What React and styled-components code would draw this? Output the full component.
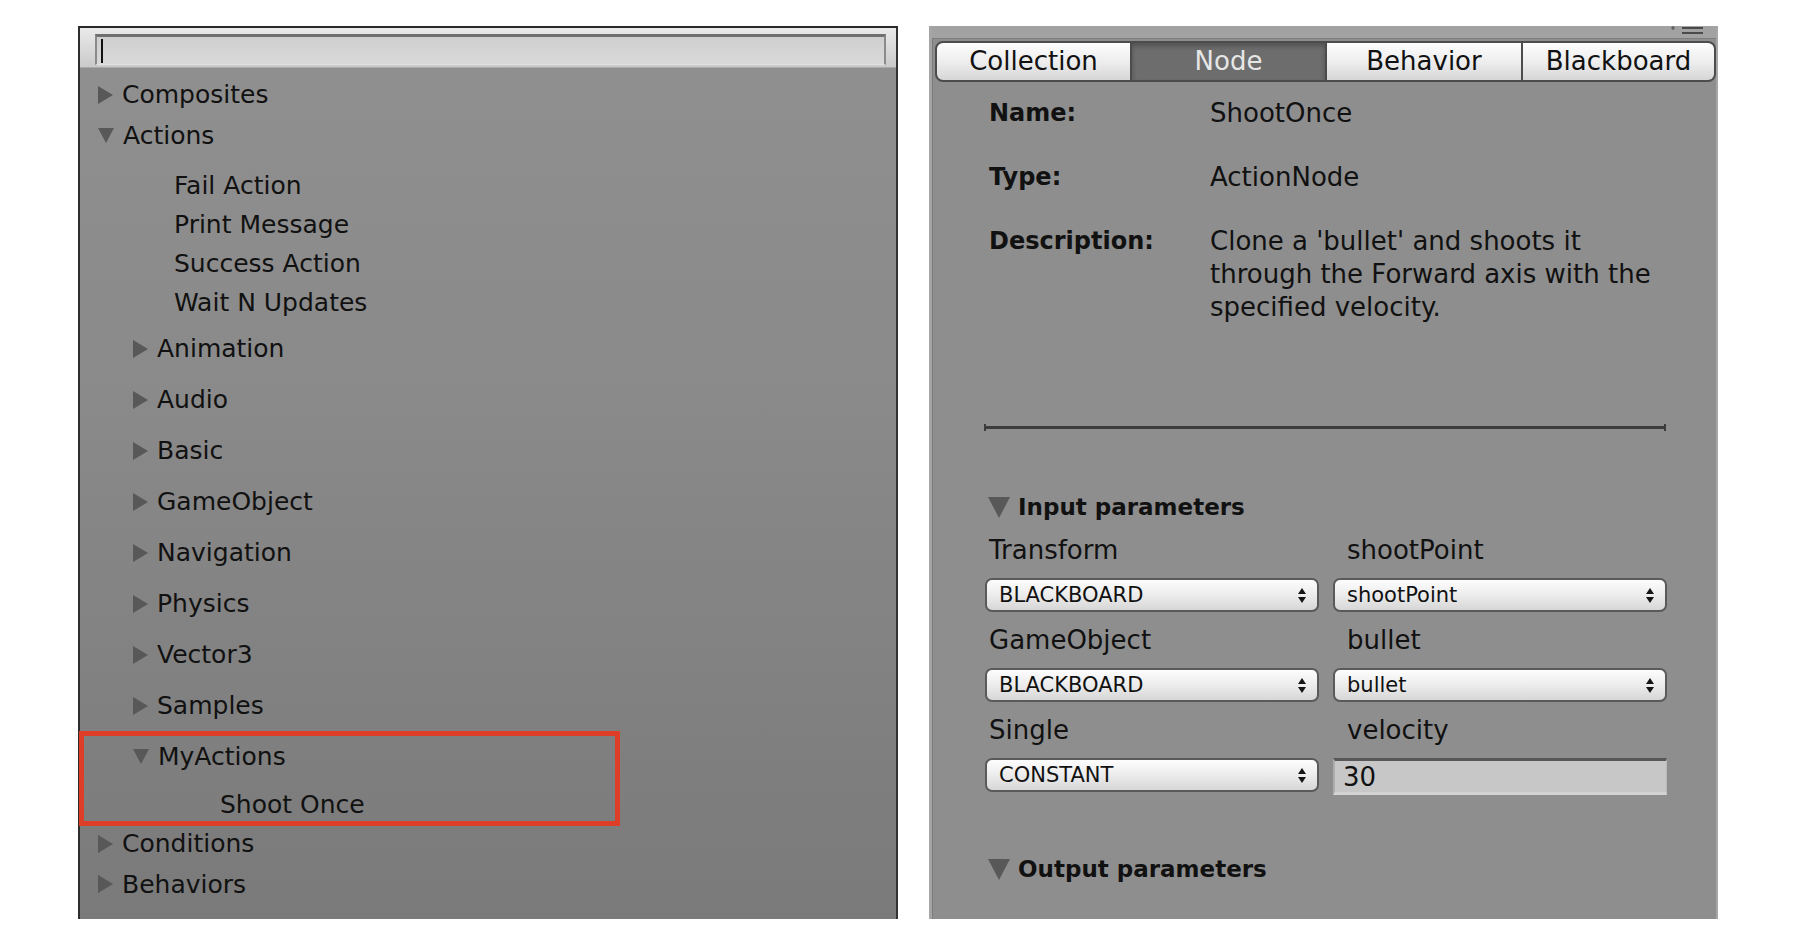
import styled, { createGlobalStyle } from "styled-components";

const GlobalStyle = createGlobalStyle`
  body {
    margin: 0;
    background: #ffffff;
    font-family: "DejaVu Sans", "Liberation Sans", sans-serif;
  }
`;

const Page = styled.div`
  display: flex;
  align-items: flex-start;
  gap: 31px;
  padding: 26px 0 0 78px;
`;

/* ---------- left: node tree ---------- */

const TreePanel = styled.section`
  box-sizing: border-box;
  width: 820px;
  height: 893px;
  display: flex;
  flex-direction: column;
  border-top: 2px solid #2a2a2a;
  border-left: 2px solid #2e2e2e;
  border-right: 2px solid #333;
  background: linear-gradient(#909090 0%, #8a8a8a 40%, #7a7a7a 100%);
`;

const SearchBar = styled.div`
  display: flex;
  height: 40px;
  box-sizing: border-box;
  padding: 6px 10px 2px 15px;
  background: linear-gradient(#eaeaea, #cacaca);
  border-bottom: 1px solid #a9a9a9;
`;

const SearchField = styled.div`
  flex: 1;
  display: flex;
  align-items: center;
  box-sizing: border-box;
  border-top: 3px solid #707070;
  border-left: 2px solid #8a8a8a;
  border-right: 2px solid #8a8a8a;
  border-bottom: 1px solid #e2e2e2;
  background: linear-gradient(#cfcfcf, #d9d9d9);

  &::before {
    content: "";
    width: 2px;
    height: 24px;
    margin-left: 4px;
    background: #111;
  }
`;

const Tree = styled.div`
  padding-top: 6px;
`;

const Row = styled.div`
  display: flex;
  align-items: center;
  gap: 9px;
  height: ${({ $h }) => $h}px;
  padding-left: ${({ $indent }) => $indent}px;
  font-size: 25px;
  color: #111;
  white-space: nowrap;
`;

const Arrow = styled.span`
  display: inline-block;
  width: 0;
  height: 0;
  ${({ $open, $size = 8 }) =>
    $open
      ? `border-left: ${$size}px solid transparent;
         border-right: ${$size}px solid transparent;
         border-top: ${$size * 2 - 1}px solid #585858;`
      : `border-top: ${$size + 1}px solid transparent;
         border-bottom: ${$size + 1}px solid transparent;
         border-left: ${$size * 2 - 1}px solid #585858;`}
`;

const Highlight = styled.div`
  width: 541px;
  margin-left: -1px;
  box-shadow: inset 0 0 0 5px #de3d27;
`;

const Spacer = styled.div`
  height: ${({ $h }) => $h}px;
`;

const leaves = ["Fail Action", "Print Message", "Success Action", "Wait N Updates"];
const groups = [
  "Animation",
  "Audio",
  "Basic",
  "GameObject",
  "Navigation",
  "Physics",
  "Vector3",
  "Samples",
];

const NodeTree = () => (
  <TreePanel>
    <SearchBar>
      <SearchField />
    </SearchBar>
    <Tree>
      <Row $h={41} $indent={18}>
        <Arrow />
        Composites
      </Row>
      <Row $h={41} $indent={18}>
        <Arrow $open />
        Actions
      </Row>
      <Spacer $h={10} />
      {leaves.map((l) => (
        <Row key={l} $h={39} $indent={94}>
          {l}
        </Row>
      ))}
      <Spacer $h={1} />
      {groups.map((g) => (
        <Row key={g} $h={51} $indent={53}>
          <Arrow />
          {g}
        </Row>
      ))}
      <Highlight>
        <Row $h={51} $indent={54}>
          <Arrow $open />
          MyActions
        </Row>
        <Row $h={44} $indent={141}>
          Shoot Once
        </Row>
      </Highlight>
      <Row $h={35} $indent={18}>
        <Arrow />
        Conditions
      </Row>
      <Row $h={46} $indent={18}>
        <Arrow />
        Behaviors
      </Row>
    </Tree>
  </TreePanel>
);

/* ---------- right: inspector ---------- */

const Inspector = styled.section`
  box-sizing: border-box;
  width: 789px;
  height: 893px;
  background: #8e8e8e;
  border-left: 3px solid #a5a5a5;
  border-right: 2px solid #a6a6a6;
  box-shadow: inset 1px 0 #7b7b7b;
  color: #111;
`;

const TopStrip = styled.div`
  display: flex;
  justify-content: flex-end;
  height: 12px;
  padding-right: 12px;
  background: #a2a2a2;
  border-bottom: 1px solid #7d7d7d;
`;

const TabBar = styled.div`
  display: grid;
  grid-template-columns: 197px 195px 196px 1fr;
  height: 41px;
  margin: 2px 0 0 3px;
`;

const Tab = styled.div`
  display: flex;
  align-items: center;
  justify-content: center;
  box-sizing: border-box;
  padding-bottom: 2px;
  font-size: 26px;
  border: 2px solid #4c4c4c;
  border-left: ${({ $first }) => ($first ? "2px solid #4c4c4c" : "none")};
  border-radius: ${({ $first, $last }) =>
    $first ? "8px 0 0 8px" : $last ? "0 8px 8px 0" : "0"};
  color: ${({ $active }) => ($active ? "#e6e6e6" : "#111")};
  background: ${({ $active }) =>
    $active ? "#6d6d6d" : "linear-gradient(#fdfdfd, #ececec 55%, #d6d6d6)"};
  box-shadow: ${({ $active }) =>
    $active ? "inset 0 3px 5px rgba(0,0,0,0.25)" : "none"};
`;

const Details = styled.div`
  display: grid;
  grid-template-columns: 221px 460px;
  row-gap: 31px;
  padding: 15px 0 0 57px;
  line-height: 33px;
`;

const Label = styled.div`
  font-size: 24px;
  font-weight: bold;
`;

const Value = styled.div`
  font-size: 26px;
`;

const Divider = styled.div`
  position: relative;
  width: 682px;
  height: 3px;
  margin: 102px 0 0 52px;
  background: #3c3c3c;

  &::before,
  &::after {
    content: "";
    position: absolute;
    top: -2px;
    width: 2px;
    height: 7px;
    background: #3c3c3c;
  }
  &::before { left: 0; }
  &::after { right: 0; }
`;

const SectionHead = styled.div`
  display: flex;
  align-items: center;
  gap: 8px;
  height: 30px;
  margin-top: ${({ $gap }) => $gap}px;
  padding-left: 56px;
  font-size: 23px;
  font-weight: bold;
`;

const Params = styled.div`
  display: grid;
  grid-template-columns: 334px 334px;
  column-gap: 14px;
  row-gap: 11px;
  width: 682px;
  margin: 11px 0 0 53px;
`;

const ParamLabel = styled.div`
  height: 34px;
  line-height: 34px;
  font-size: 26px;
  padding-left: ${({ $second }) => ($second ? 14 : 4)}px;
`;

const Select = styled.div`
  display: flex;
  align-items: center;
  justify-content: space-between;
  box-sizing: border-box;
  height: 34px;
  padding: 0 10px 0 12px;
  border: 2px solid #5a5a5a;
  border-radius: 7px;
  background: linear-gradient(#fdfdfd, #ececec 50%, #d7d7d7);
  font-size: 21px;
`;

const NumberField = styled.div`
  display: flex;
  align-items: center;
  box-sizing: border-box;
  height: 37px;
  padding-left: 8px;
  border-top: 3px solid #585858;
  border-left: 2px solid #acacac;
  border-right: 1px solid #b9b9b9;
  border-bottom: 3px solid #d3d3d3;
  background: #c7c7c7;
  font-size: 26px;
`;

const UpDown = () => (
  <svg width="10" height="17" viewBox="0 0 10 17">
    <path d="M1 7 L5 1 L9 7 Z M1 10 L5 16 L9 10 Z" fill="#151515" />
  </svg>
);

const MenuIcon = () => (
  <svg width="34" height="12" viewBox="0 0 34 12">
    <path d="M3 0 V4 M1 2 H5" stroke="#555" strokeWidth="1.2" />
    <rect x="12" y="1" width="21" height="2" fill="#4a4a4a" />
    <rect x="12" y="6" width="21" height="2" fill="#4a4a4a" />
  </svg>
);

const params = [
  ["Transform", "shootPoint", "BLACKBOARD", "shootPoint"],
  ["GameObject", "bullet", "BLACKBOARD", "bullet"],
  ["Single", "velocity", "CONSTANT", null],
];

const NodeInspector = () => (
  <Inspector>
    <TopStrip>
      <MenuIcon />
    </TopStrip>
    <TabBar>
      <Tab $first>Collection</Tab>
      <Tab $active>Node</Tab>
      <Tab>Behavior</Tab>
      <Tab $last>Blackboard</Tab>
    </TabBar>
    <Details>
      <Label>Name:</Label>
      <Value>ShootOnce</Value>
      <Label>Type:</Label>
      <Value>ActionNode</Value>
      <Label>Description:</Label>
      <Value>
        Clone a 'bullet' and shoots it through the Forward axis with the
        specified velocity.
      </Value>
    </Details>
    <Divider />
    <SectionHead $gap={63}>
      <Arrow $open $size={11} />
      Input parameters
    </SectionHead>
    <Params>
      {params.flatMap(([type, name, mode, value]) => [
        <ParamLabel key={type}>{type}</ParamLabel>,
        <ParamLabel key={name} $second>
          {name}
        </ParamLabel>,
        <Select key={type + "-mode"}>
          {mode}
          <UpDown />
        </Select>,
        value ? (
          <Select key={name + "-value"}>
            {value}
            <UpDown />
          </Select>
        ) : (
          <NumberField key="velocity-value">30</NumberField>
        ),
      ])}
    </Params>
    <SectionHead $gap={59}>
      <Arrow $open $size={11} />
      Output parameters
    </SectionHead>
  </Inspector>
);

export default function App() {
  return (
    <>
      <GlobalStyle />
      <Page>
        <NodeTree />
        <NodeInspector />
      </Page>
    </>
  );
}
